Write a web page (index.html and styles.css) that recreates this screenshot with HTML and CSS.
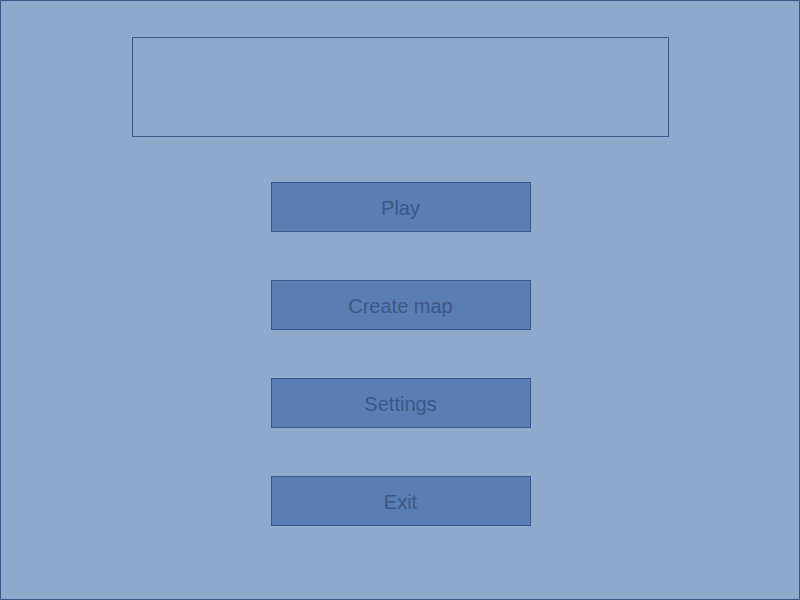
FILE: index.html
```html
<!DOCTYPE html>
<html>
<head>
<meta charset="utf-8">
<link rel="stylesheet" href="styles.css">
</head>
<body>
<div class="screen">
  <div class="title-box"></div>
  <div class="menu">
    <div class="btn">Play</div>
    <div class="btn">Create map</div>
    <div class="btn">Settings</div>
    <div class="btn">Exit</div>
  </div>
</div>
</body>
</html>
```
FILE: styles.css
```css
html, body {
  margin: 0;
  padding: 0;
  background: #8fa9cc;
}
.screen {
  box-sizing: border-box;
  width: 800px;
  height: 600px;
  border: 1px solid #3d5888;
  background: #8fa9cc;
  display: flex;
  flex-direction: column;
  align-items: center;
  padding-top: 36px;
  font-family: "Liberation Sans", Arial, sans-serif;
}
.title-box {
  box-sizing: border-box;
  width: 537px;
  height: 100px;
  border: 1px solid #3d5888;
  margin-left: 1px;
}
.menu {
  display: flex;
  flex-direction: column;
  gap: 48px;
  margin-top: 45px;
  margin-left: 1px;
}
.btn {
  box-sizing: border-box;
  width: 260px;
  height: 50px;
  border: 1px solid #3d5888;
  background: #5a7db3;
  color: #3d5888;
  font-size: 20px;
  display: flex;
  align-items: center;
  justify-content: center;
  padding-top: 3px;
}
```
